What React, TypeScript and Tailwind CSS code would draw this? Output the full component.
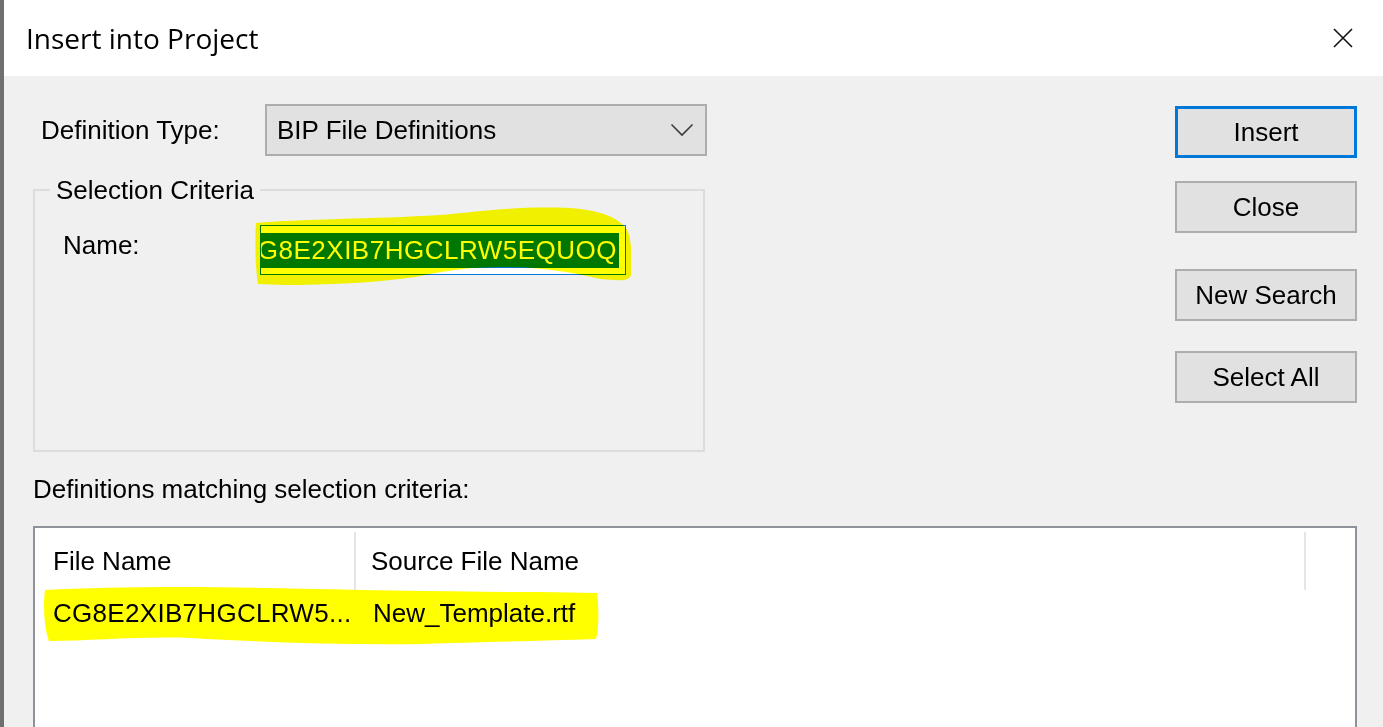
import React from "react";

const sans = "font-['Liberation_Sans',Arial,sans-serif]";

function DialogButton({ label, primary }: { label: string; primary?: boolean }) {
  return (
    <button
      type="button"
      className={
        "flex h-[52px] w-[182px] items-center justify-center bg-[#e1e1e1] text-[26px] leading-[30px] text-black " +
        (primary ? "border-[3px] border-[#0078d7]" : "border-2 border-[#adadad]")
      }
    >
      {label}
    </button>
  );
}

function Chevron() {
  return (
    <svg width="24" height="14" viewBox="0 0 24 14" fill="none">
      <path d="M1.5 1.5 L12 12 L22.5 1.5" stroke="#3c3c3c" strokeWidth="1.6" />
    </svg>
  );
}

function CloseIcon() {
  return (
    <svg width="20" height="20" viewBox="0 0 20 20" fill="none">
      <path d="M1 1 L19 19 M19 1 L1 19" stroke="#111" strokeWidth="1.6" />
    </svg>
  );
}

// the yellow marker strokes drawn over the screenshot
function MarkerBlob({ d, w, h, className }: { d: string; w: number; h: number; className: string }) {
  return (
    <svg
      width={w}
      height={h}
      viewBox={`0 0 ${w} ${h}`}
      className={"pointer-events-none absolute mix-blend-multiply " + className}
    >
      <path d={d} fill="#ffff00" />
    </svg>
  );
}

export default function App() {
  return (
    <div className={`h-[727px] w-[1383px] overflow-hidden border-l-4 border-[#6f6f6f] bg-[#f0f0f0] ${sans}`}>
      <div className="flex h-[76px] items-center justify-between bg-white pl-[22px] pr-[30px]">
        <span className="font-['Open_Sans',sans-serif] text-[28px] text-black">Insert into Project</span>
        <CloseIcon />
      </div>

      <div className="pl-[29px] pr-[26px] text-[26px] leading-[30px] text-black">
        <div className="flex justify-between">
          <div className="w-[674px]">
            <div className="mt-[28px] flex h-[52px] items-center">
              <span className="w-[232px] pl-[8px]">Definition Type:</span>
              <div className="flex h-[52px] w-[442px] items-center justify-between border-2 border-[#adadad] bg-[#e1e1e1] pl-[10px] pr-[11px]">
                <span>BIP File Definitions</span>
                <Chevron />
              </div>
            </div>

            <fieldset className="mt-[19px] h-[277px] w-[672px] border-2 border-[#dcdcdc] pl-[28px]">
              <legend className="-ml-[13px] px-[6px]">Selection Criteria</legend>
              <div className="mt-[20px] flex items-center">
                <span className="w-[197px] -translate-y-[5px]">Name:</span>
                <div className="relative h-[50px] w-[366px]">
                  <div className="flex h-full w-full items-center justify-end overflow-hidden border-[1.5px] border-[#0078d7] bg-white pl-[5px] pr-[6px]">
                    <span className="flex h-[35px] items-center whitespace-nowrap bg-[#0078d7] pr-[2px] tracking-[0.5px] text-white">
                      CG8E2XIB7HGCLRW5EQUOQ
                    </span>
                    <span className="h-[35px] w-[2px] bg-[#e06000]" />
                  </div>
                  <MarkerBlob
                    w={380}
                    h={82}
                    className="-left-[5px] -top-[18px]"
                    d="M1 16 C40 12 120 12 185 8 C230 4 260 -1 315 1 C345 3 360 10 368 18 C374 24 375 30 376 40 L376 68 C374 74 368 74 345 72 C320 66 290 60 250 60 C210 60 190 64 160 70 C120 76 70 78 30 78 L3 77 C0 60 0 30 1 16 Z"
                  />
                </div>
              </div>
            </fieldset>

            <div className="mt-[22px]">Definitions matching selection criteria:</div>
          </div>

          <div className="flex flex-col pt-[30px]">
            <DialogButton label="Insert" primary />
            <div className="mt-[23px]">
              <DialogButton label="Close" />
            </div>
            <div className="mt-[36px]">
              <DialogButton label="New Search" />
            </div>
            <div className="mt-[30px]">
              <DialogButton label="Select All" />
            </div>
          </div>
        </div>

        <div className="mt-[22px] h-[240px] border-2 border-[#8f9298] bg-white">
          <div className="flex h-[62px] pt-[4px]">
            <div className="flex h-[58px] w-[321px] items-center border-r-2 border-[#e5e5e5] pl-[18px]">File Name</div>
            <div className="flex h-[58px] w-[950px] items-center border-r-2 border-[#e5e5e5] pl-[15px]">Source File Name</div>
          </div>
          <div className="relative flex h-[46px] items-center">
            <span className="w-[323px] pl-[18px] tracking-[0.3px]">CG8E2XIB7HGCLRW5...</span>
            <span className="pl-[15px]">New_Template.rtf</span>
            <MarkerBlob
              w={560}
              h={62}
              className="left-[6px] -top-[6px]"
              d="M4 6 C60 3 140 2 230 4 C320 6 420 8 500 8 L556 9 C558 25 558 45 555 55 C500 57 440 58 380 60 C300 61 220 58 150 54 C100 52 50 57 8 57 C3 45 2 20 4 6 Z"
            />
          </div>
        </div>
      </div>
    </div>
  );
}
